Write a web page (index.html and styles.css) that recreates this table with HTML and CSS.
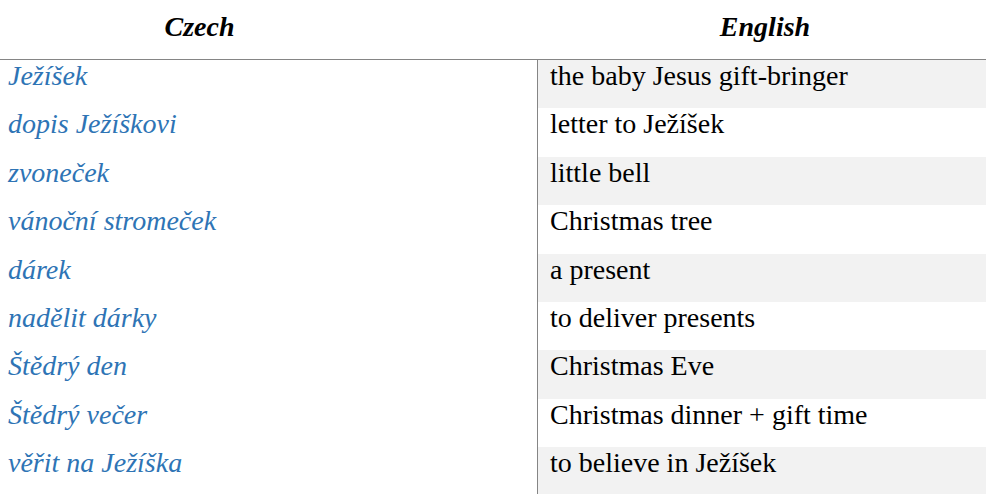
FILE: index.html
```html
<!DOCTYPE html>
<html lang="cs">
<head>
<meta charset="utf-8">
<title>Czech – English</title>
<link rel="stylesheet" href="styles.css">
</head>
<body>
<div class="table">
  <div class="head">
    <div class="hcell hcz">Czech</div>
    <div class="hcell hen">English</div>
  </div>
  <div class="body">
    <div class="row odd"><div class="cz">Ježíšek</div><div class="en">the baby Jesus gift-bringer</div></div>
    <div class="row"><div class="cz">dopis Ježíškovi</div><div class="en">letter to Ježíšek</div></div>
    <div class="row odd"><div class="cz">zvoneček</div><div class="en">little bell</div></div>
    <div class="row"><div class="cz">vánoční stromeček</div><div class="en">Christmas tree</div></div>
    <div class="row odd"><div class="cz">dárek</div><div class="en">a present</div></div>
    <div class="row"><div class="cz">nadělit dárky</div><div class="en">to deliver presents</div></div>
    <div class="row odd"><div class="cz">Štědrý den</div><div class="en">Christmas Eve</div></div>
    <div class="row"><div class="cz">Štědrý večer</div><div class="en">Christmas dinner + gift time</div></div>
    <div class="row odd"><div class="cz">věřit na Ježíška</div><div class="en">to believe in Ježíšek</div></div>
  </div>
</div>
</body>
</html>
```
FILE: styles.css
```css
html, body {
  margin: 0;
  padding: 0;
  background: #ffffff;
}
body {
  font-family: "Liberation Serif", "Times New Roman", serif;
  font-size: 28px;
  color: #000;
  overflow: hidden;
}
.table {
  width: 986px;
}
.head {
  display: grid;
  grid-template-columns: 537px 1fr;
  height: 59px;
  border-bottom: 1px solid #858585;
  box-sizing: content-box;
}
.hcell {
  font-weight: bold;
  font-style: italic;
  text-align: center;
  padding-top: 11px;
  line-height: 32px;
}
.hcz {
  padding-right: 138px;
}
.hen {
  padding-left: 7px;
}
.row {
  display: grid;
  grid-template-columns: 537px 1fr;
  height: 48.4px;
}
.cz {
  color: #2e74b5;
  font-style: italic;
  padding-left: 8px;
  line-height: 32px;
}
.en {
  border-left: 1px solid #858585;
  padding-left: 12px;
  line-height: 32px;
}
.row.odd .en {
  background: #f2f2f2;
}
```
